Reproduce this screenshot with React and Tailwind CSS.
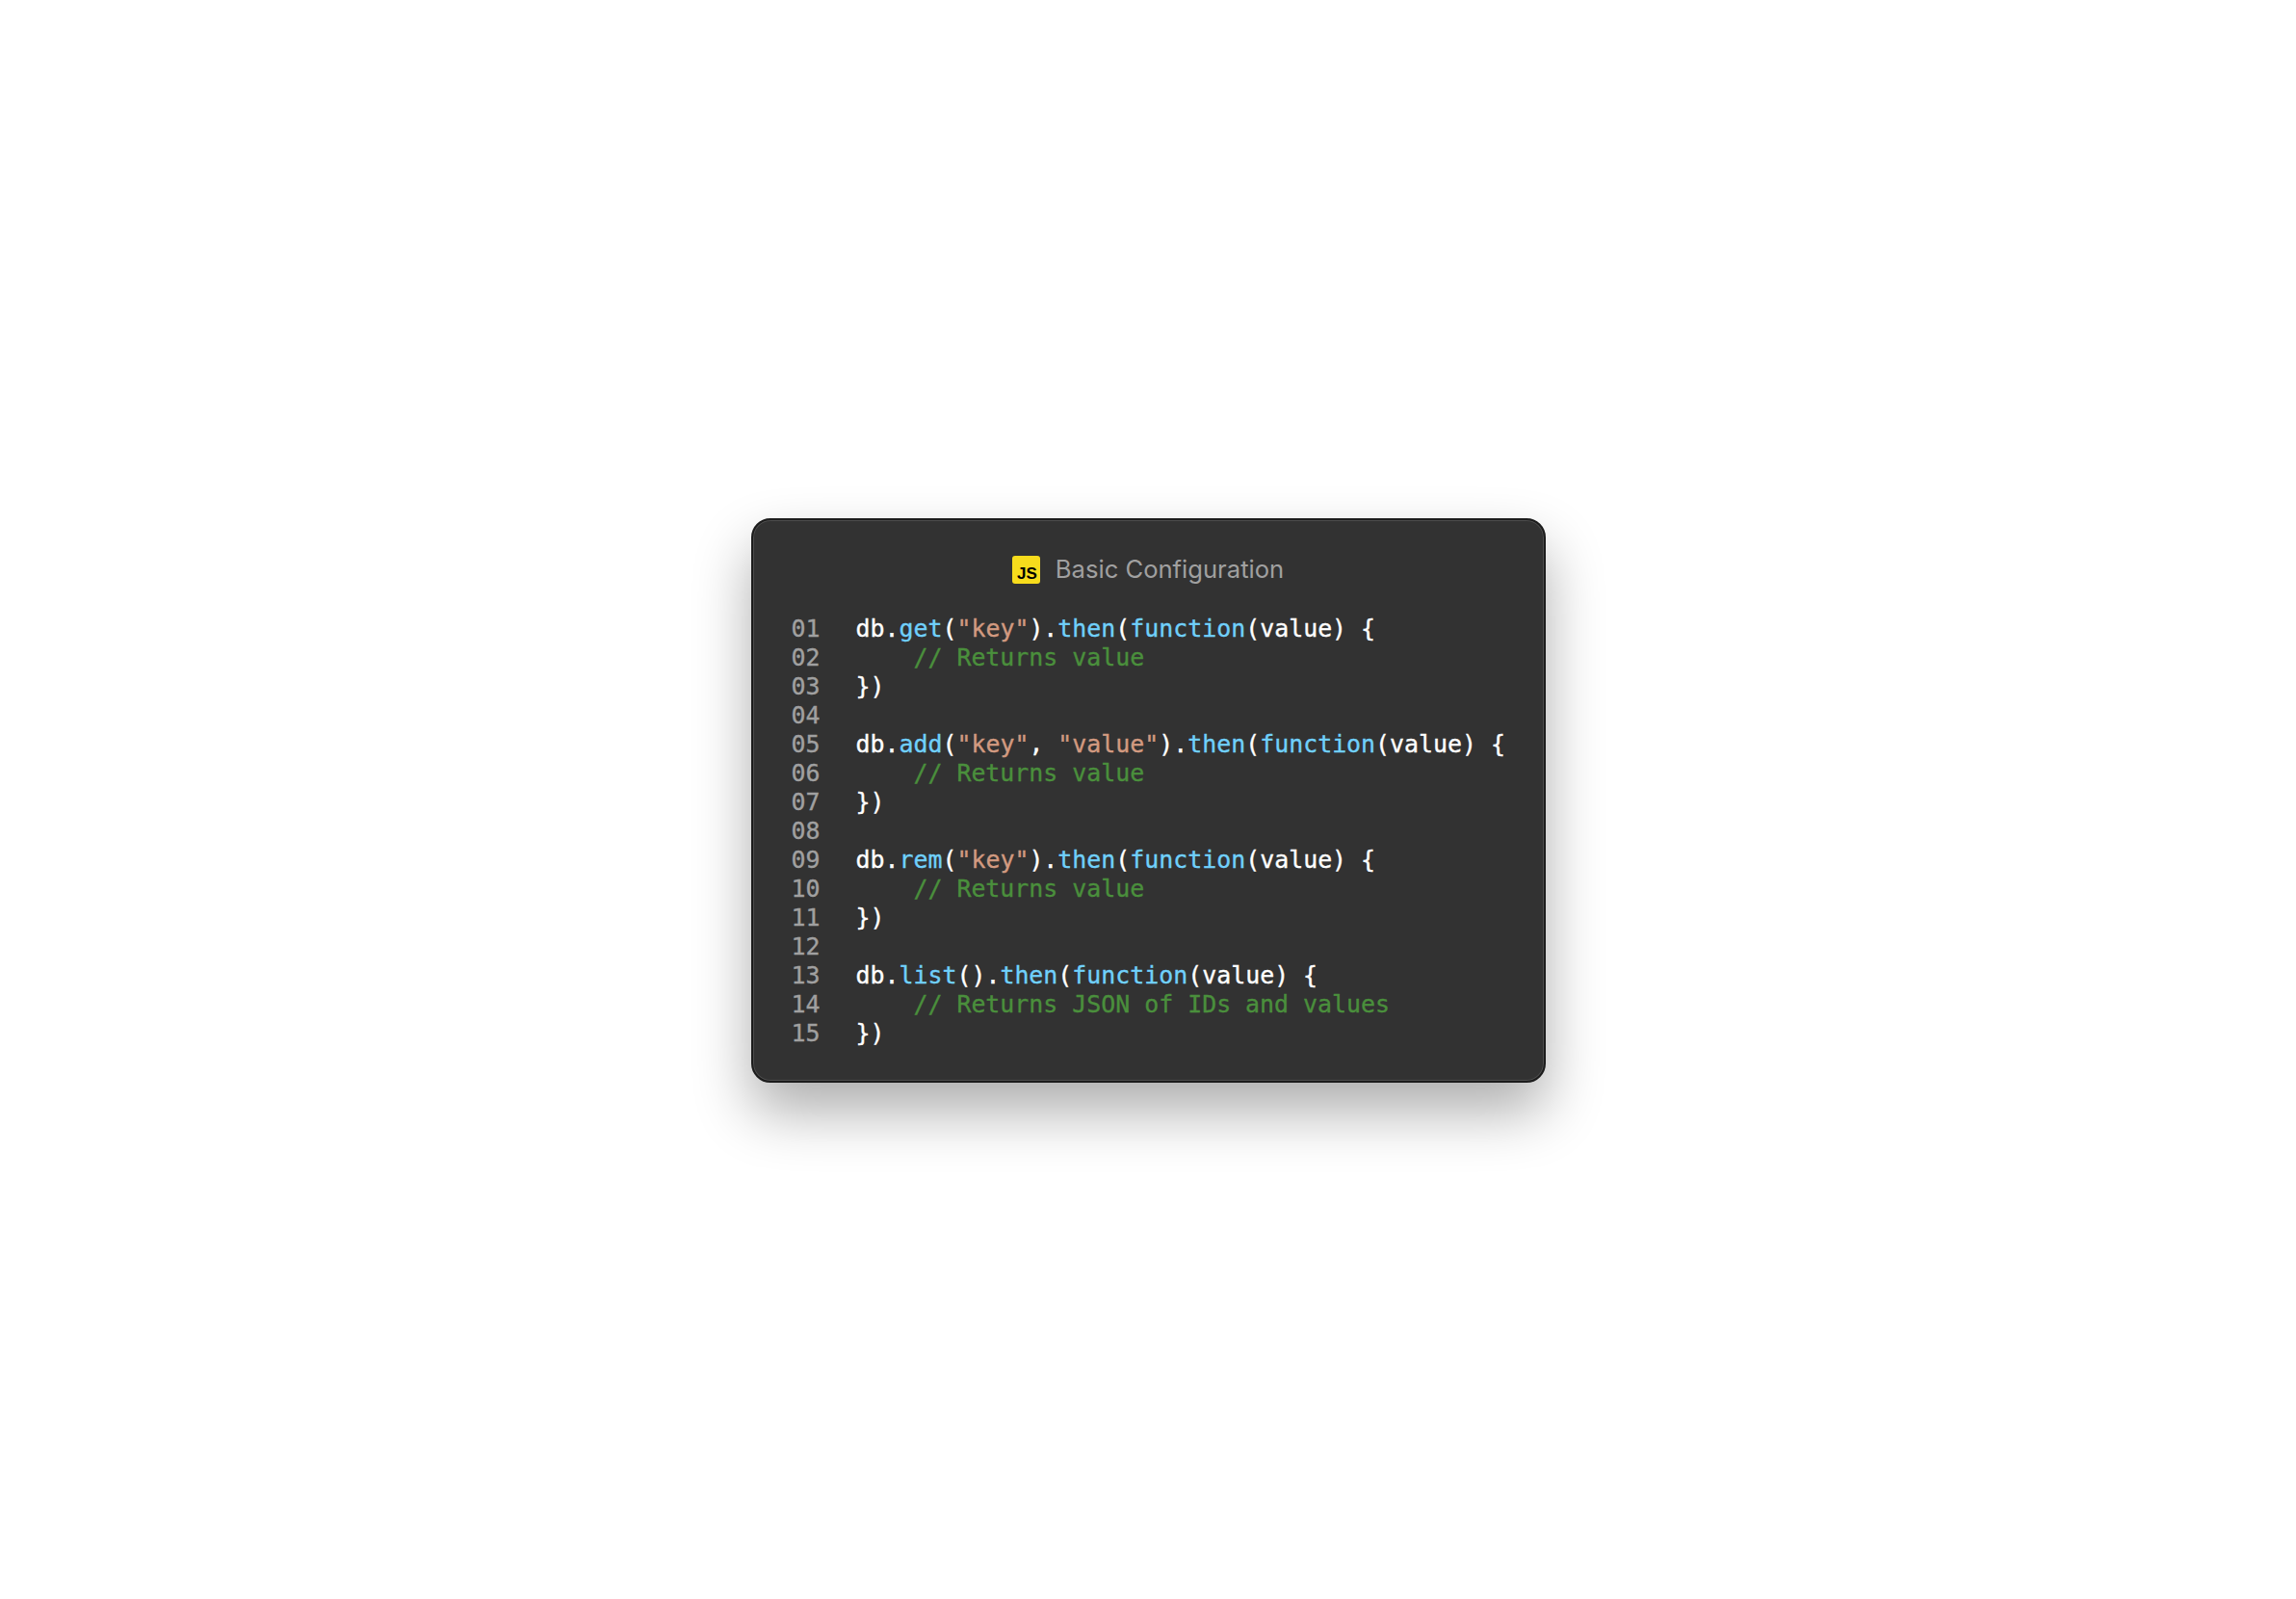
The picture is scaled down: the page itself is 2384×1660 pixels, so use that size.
const W = "text-white";
const B = "text-[#70d0fb]";
const S = "text-[#d29a80]";
const C = "text-[#4a8f3c]";

const then = () => [
  [W, ")."],
  [B, "then"],
  [W, "("],
  [B, "function"],
  [W, "(value) {"],
];

const comment = (text) => [[C, "    // " + text]];
const close = [[W, "})"]];

const LINES = [
  [[W, "db."], [B, "get"], [W, "("], [S, '"key"'], ...then()],
  comment("Returns value"),
  close,
  [],
  [[W, "db."], [B, "add"], [W, "("], [S, '"key"'], [W, ", "], [S, '"value"'], ...then()],
  comment("Returns value"),
  close,
  [],
  [[W, "db."], [B, "rem"], [W, "("], [S, '"key"'], ...then()],
  comment("Returns value"),
  close,
  [],
  [[W, "db."], [B, "list"], [W, "()."], [B, "then"], [W, "("], [B, "function"], [W, "(value) {"]],
  comment("Returns JSON of IDs and values"),
  close,
];

function JsLogo() {
  return (
    <span className="flex h-[29px] w-[29px] items-end justify-end rounded-[3px] bg-[#f7dc1c] pr-[3px] font-['Liberation_Sans',sans-serif] text-[17px] leading-[21px] font-bold text-black">
      JS
    </span>
  );
}

export default function App() {
  return (
    <div className="flex min-h-[1660px] items-center justify-center bg-white pt-[2px]">
      <div className="flex h-[586px] w-[825px] flex-col rounded-[20px] border-2 border-[#1c1c1c] bg-[#323232] pt-[34px] shadow-[inset_0_0_0_1px_#4d4d4d,0_30px_60px_rgba(0,0,0,0.32)]">
        <header className="flex h-[34px] items-center justify-center gap-[16px]">
          <JsLogo />
          <h1 className="font-['Inter',sans-serif] text-[25.6px] font-normal text-[#a0a0a0]">
            Basic Configuration
          </h1>
        </header>
        <div className="mt-[30px] flex flex-col font-['DejaVu_Sans_Mono',monospace] text-[24.9px] leading-[30px] [-webkit-text-stroke:0.35px]">
          {LINES.map((segs, i) => (
            <div key={i} className="flex h-[30px]">
              <span className="ml-[40px] w-[67px] text-[#a0a0a0]">
                {String(i + 1).padStart(2, "0")}
              </span>
              <span className="whitespace-pre">
                {segs.map(([color, text], j) => (
                  <span key={j} className={color}>
                    {text}
                  </span>
                ))}
              </span>
            </div>
          ))}
        </div>
      </div>
    </div>
  );
}
